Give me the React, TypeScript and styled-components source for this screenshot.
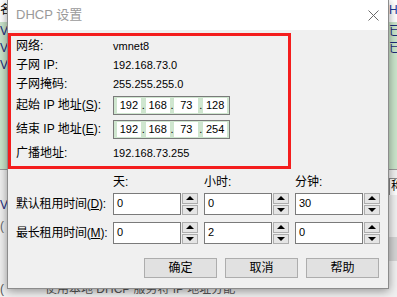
import React from "react";
import styled, { createGlobalStyle } from "styled-components";

const Global = createGlobalStyle`
  html, body { margin: 0; padding: 0; }
  body {
    width: 397px; height: 297px; overflow: hidden; background: #f0f0f0;
    font-family: "Liberation Sans", "Noto Sans CJK SC", sans-serif;
  }
`;

const Desktop = styled.div`
  position: relative;
  width: 397px;
  height: 297px;
  overflow: hidden;
  background: #f0f0f0;
`;

/* ---------- background application (mostly hidden) ---------- */
const BgApp = styled.div`
  display: flex;
  flex-direction: column;
  width: 100%;
  height: 100%;
`;

const BgRow = styled.div<{ $h: number; $bg?: string; $color?: string }>`
  display: grid;
  grid-template-columns: 7px 382px 1fr;
  height: ${(p) => p.$h}px;
  flex: none;
  background: ${(p) => p.$bg || "transparent"};
  color: ${(p) => p.$color || "#000"};
  font-size: 12px;
  line-height: ${(p) => p.$h}px;
  overflow: hidden;
  white-space: nowrap;
`;

const BgCell = styled.span<{ $indent?: number }>`
  overflow: hidden;
  padding-left: ${(p) => p.$indent || 0}px;
`;

const BgList = styled.div`
  display: flex;
  flex-direction: column;
  height: 149px;
  flex: none;
  background: #cbe5cb;
  border-top: 1px solid #ffffff;
  border-bottom: 1px solid #9a9a9a;
  padding-top: 1px;
  box-sizing: border-box;
`;

const BgBox = styled.span`
  border: 1px solid #8a8a8a;
  background: #fff;
  line-height: 14px;
  height: 16px;
  align-self: center;
  padding-left: 1px;
`;

const BgBand = styled.span`
  background: #d4d4d4;
`;

/* ---------- dialog window ---------- */
const Window = styled.div`
  position: absolute;
  left: 7px;
  top: 0;
  width: 382px;
  height: 289px;
  box-sizing: border-box;
  background: #f0f0f0;
  border: 1px solid #8c8c8c;
  border-top: none;
  box-shadow: 0 2px 9px rgba(0, 0, 0, 0.4);
  display: flex;
  flex-direction: column;
  font-family: "Liberation Sans", "Noto Sans CJK SC", sans-serif;
`;

const TitleBar = styled.div`
  height: 30px;
  flex: none;
  background: #ffffff;
  display: flex;
  align-items: center;
  justify-content: space-between;
  padding: 0 9px 0 8px;
`;

const Title = styled.span`
  font-size: 13px;
  color: #9a9a9a;
  line-height: 16px;
`;

const Body = styled.div`
  display: flex;
  flex-direction: column;
  padding-top: 3px;
`;

const RedBox = styled.div`
  width: 283px;
  box-sizing: border-box;
  border: 3px solid #f41d1d;
  padding: 0 0 1px 5px;
  display: grid;
  grid-template-columns: 97px 1fr;
  grid-template-rows: 19px 19px 19px 24px 24px 24px;
  align-items: center;
`;

const Label = styled.span`
  font-size: 12px;
  line-height: 16px;
  color: #000;
  white-space: nowrap;
`;

const Value = styled.span`
  font-size: 11px;
  line-height: 16px;
  color: #000;
  white-space: nowrap;
`;

const IpBox = styled.div`
  width: 117px;
  height: 19px;
  box-sizing: border-box;
  border: 1px solid #7a7a7a;
  background: #cfe6cf;
  display: flex;
  align-items: center;
  padding: 0 2px 0 3px;
`;

const Octet = styled.span`
  width: 24px;
  height: 15px;
  background: #ffffff;
  font-size: 11px;
  line-height: 15px;
  text-align: center;
  color: #000;
`;

const Dot = styled.span`
  width: 5px;
  font-size: 11px;
  line-height: 15px;
  text-align: center;
  color: #000;
`;

const LeaseGrid = styled.div`
  margin-top: 5px;
  padding-left: 8px;
  display: grid;
  grid-template-columns: 91px 85px 85px 85px;
  grid-template-rows: 12px 22px 22px;
  column-gap: 6px;
  row-gap: 7px;
`;

const HeadCell = styled.span`
  font-size: 12px;
  line-height: 16px;
  height: 16px;
  color: #000;
`;

const RowLabel = styled.span`
  font-size: 12px;
  line-height: 22px;
  color: #000;
  white-space: nowrap;
  letter-spacing: -0.2px;
`;

const Spin = styled.div`
  display: flex;
  gap: 1px;
  height: 22px;
`;

const SpinInput = styled.div`
  width: 68px;
  height: 22px;
  box-sizing: border-box;
  border: 1px solid #7a7a7a;
  background: #fff;
  font-size: 11px;
  line-height: 14px;
  padding: 2px 0 0 3px;
  color: #000;
`;

const SpinButtons = styled.div`
  width: 16px;
  display: flex;
  flex-direction: column;
  gap: 1px;
`;

const SpinBtn = styled.div`
  flex: 1;
  box-sizing: border-box;
  border: 1px solid #adadad;
  background: #e5e5e5;
  display: flex;
  align-items: center;
  justify-content: center;
`;

const Arrow = styled.span<{ $down?: boolean }>`
  width: 0;
  height: 0;
  border-left: 4px solid transparent;
  border-right: 4px solid transparent;
  ${(p) =>
    p.$down ? "border-top: 4px solid #000;" : "border-bottom: 4px solid #000;"}
`;

const ButtonRow = styled.div`
  margin-top: 14px;
  display: flex;
  justify-content: flex-end;
  gap: 8px;
  padding-right: 9px;
`;

const Button = styled.div`
  width: 73px;
  height: 20px;
  box-sizing: border-box;
  border: 1px solid #adadad;
  background: #e1e1e1;
  font-size: 12px;
  line-height: 18px;
  text-align: center;
  color: #000;
`;

const SpinBox: React.FC<{ value: string }> = ({ value }) => (
  <Spin>
    <SpinInput>{value}</SpinInput>
    <SpinButtons>
      <SpinBtn>
        <Arrow />
      </SpinBtn>
      <SpinBtn>
        <Arrow $down />
      </SpinBtn>
    </SpinButtons>
  </Spin>
);

const Ip: React.FC<{ parts: string[] }> = ({ parts }) => (
  <IpBox>
    {parts.map((p, i) => (
      <React.Fragment key={i}>
        {i > 0 && <Dot>.</Dot>}
        <Octet>{p}</Octet>
      </React.Fragment>
    ))}
  </IpBox>
);

const CloseIcon = () => (
  <svg width="11" height="11" viewBox="0 0 11 11">
    <path d="M0.5 0.5 L10.5 10.5 M10.5 0.5 L0.5 10.5" stroke="#6a6a6a" strokeWidth="1" fill="none" />
  </svg>
);

export default function App() {
  return (
    <>
      <Global />
      <Desktop>
        <BgApp>
          <BgRow $h={21} $bg="#ffffff">
            <BgCell>名</BgCell>
            <BgCell />
            <BgCell>
              <span style={{ color: "#1a3a9a" }}>H</span>
              <span style={{ color: "#b03050" }}>e</span>
            </BgCell>
          </BgRow>
          <BgList>
            <BgRow $h={17} $color="#1c2a7a">
              <BgCell>V</BgCell>
              <BgCell />
              <BgCell>已桥</BgCell>
            </BgRow>
            <BgRow $h={17} $color="#1c2a7a">
              <BgCell>V</BgCell>
              <BgCell />
              <BgCell>已连</BgCell>
            </BgRow>
            <BgRow $h={17} $color="#1c2a7a">
              <BgCell>V</BgCell>
              <BgCell />
              <BgCell />
            </BgRow>
          </BgList>
          <BgRow $h={8} />
          <BgRow $h={17}>
            <BgCell />
            <BgCell />
            <BgBox>称</BgBox>
          </BgRow>
          <BgRow $h={20} $color="#1c2a7a">
            <BgCell>V</BgCell>
            <BgCell />
            <BgCell />
          </BgRow>
          <BgRow $h={22} $color="#666">
            <BgCell>(</BgCell>
            <BgCell />
            <BgCell />
          </BgRow>
          <BgRow $h={24}>
            <BgCell />
            <BgCell />
            <BgBand />
          </BgRow>
          <BgRow $h={18} />
          <BgRow $h={20} $color="#555">
            <BgCell>(</BgCell>
            <BgCell $indent={38}>使用本地 DHCP 服务将 IP 地址分配</BgCell>
            <BgCell />
          </BgRow>
        </BgApp>

        <Window>
          <TitleBar>
            <Title>DHCP 设置</Title>
            <CloseIcon />
          </TitleBar>
          <Body>
            <RedBox>
              <Label>网络:</Label>
              <Value>vmnet8</Value>
              <Label>子网 IP:</Label>
              <Value>192.168.73.0</Value>
              <Label>子网掩码:</Label>
              <Value>255.255.255.0</Value>
              <Label>
                起始 IP 地址(<u>S</u>):
              </Label>
              <Ip parts={["192", "168", "73", "128"]} />
              <Label>
                结束 IP 地址(<u>E</u>):
              </Label>
              <Ip parts={["192", "168", "73", "254"]} />
              <Label>广播地址:</Label>
              <Value>192.168.73.255</Value>
            </RedBox>

            <LeaseGrid>
              <span />
              <HeadCell>天:</HeadCell>
              <HeadCell>小时:</HeadCell>
              <HeadCell>分钟:</HeadCell>

              <RowLabel>
                默认租用时间(<u>D</u>):
              </RowLabel>
              <SpinBox value="0" />
              <SpinBox value="0" />
              <SpinBox value="30" />

              <RowLabel>
                最长租用时间(<u>M</u>):
              </RowLabel>
              <SpinBox value="0" />
              <SpinBox value="2" />
              <SpinBox value="0" />
            </LeaseGrid>

            <ButtonRow>
              <Button>确定</Button>
              <Button>取消</Button>
              <Button>帮助</Button>
            </ButtonRow>
          </Body>
        </Window>
      </Desktop>
    </>
  );
}
